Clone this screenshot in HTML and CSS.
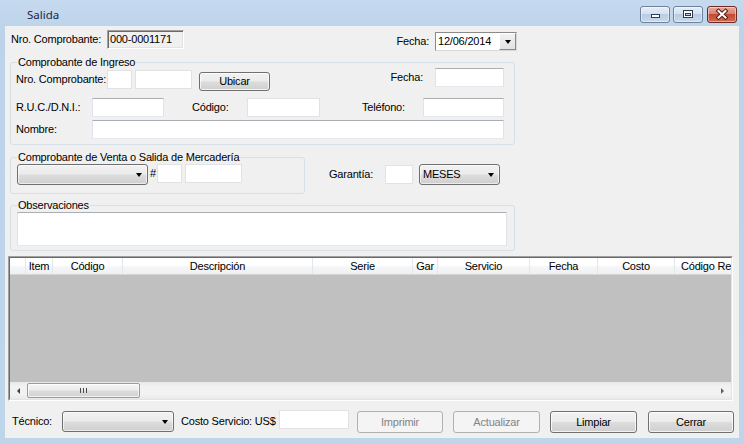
FILE: index.html
```html
<!DOCTYPE html>
<html lang="es">
<head>
<meta charset="utf-8">
<title>Salida</title>
<link rel="stylesheet" href="styles.css">
</head>
<body>
<div class="window">
  <header class="titlebar">
    <span class="title">Salida</span>
    <div class="caption-buttons">
      <span class="capbtn"><svg width="28" height="15" viewBox="0 0 28 15"><rect x="10.5" y="7.5" width="8" height="3" fill="#fff" stroke="#2c3b52"/></svg></span>
      <span class="capbtn"><svg width="28" height="15" viewBox="0 0 28 15"><rect x="9.5" y="3.5" width="9" height="7" fill="#fff" stroke="#2c3b52"/><rect x="11.5" y="6.5" width="5" height="2" fill="#c9d8ea" stroke="#2c3b52"/></svg></span>
      <span class="capbtn close"><svg width="28" height="15" viewBox="0 0 28 15"><path d="M10.5 4 L17.5 10.5 M17.5 4 L10.5 10.5" stroke="#4a1a12" stroke-width="4" stroke-linecap="square" fill="none"/><path d="M10.5 4 L17.5 10.5 M17.5 4 L10.5 10.5" stroke="#fff" stroke-width="2" stroke-linecap="square" fill="none"/></svg></span>
    </div>
  </header>

  <main class="client">
    <div class="row top-row">
      <span class="lbl w96">Nro. Comprobante:</span>
      <span class="ro">000-0001171</span>
      <span class="lbl fecha-top">Fecha:</span>
      <div class="datepick"><span class="dp-text">12/06/2014</span><span class="dp-btn"></span></div>
    </div>

    <section class="group g-ingreso">
      <div class="legend">Comprobante de Ingreso</div>
      <div class="row gi-row gi-a">
        <span class="lbl w91">Nro. Comprobante:</span>
        <span class="tb w25"></span>
        <span class="tb w57 ml3"></span>
        <span class="btn ubicar">Ubicar</span>
        <span class="lbl fecha-in">Fecha:</span>
        <span class="tb dark w69 up2"></span>
      </div>
      <div class="row gi-row gi-b">
        <span class="lbl w76">R.U.C./D.N.I.:</span>
        <span class="tb dark w72"></span>
        <span class="lbl lbl-cod">Código:</span>
        <span class="tb w73"></span>
        <span class="lbl lbl-tel">Teléfono:</span>
        <span class="tb dark w81"></span>
      </div>
      <div class="row gi-row gi-c">
        <span class="lbl w76">Nombre:</span>
        <span class="tb dark w412"></span>
      </div>
    </section>

    <div class="row band">
      <section class="group g-venta">
        <div class="legend">Comprobante de Venta o Salida de Mercadería</div>
        <div class="row gv-row">
          <span class="combo w131"></span>
          <span class="lbl hash">#</span>
          <span class="tb w25"></span>
          <span class="tb w57 ml3"></span>
        </div>
      </section>
      <span class="lbl lbl-gar">Garantía:</span>
      <span class="tb gar"></span>
      <span class="combo meses">MESES</span>
    </div>

    <section class="group g-obs">
      <div class="legend">Observaciones</div>
      <div class="tb dark obs"></div>
    </section>

    <div class="grid">
      <div class="grid-inner">
        <div class="grid-head">
          <span class="hc c-rh"></span>
          <span class="hc c-item">Item</span>
          <span class="hc c-cod">Código</span>
          <span class="hc c-desc">Descripción</span>
          <span class="hc c-serie">Serie</span>
          <span class="hc c-gar">Gar</span>
          <span class="hc c-serv">Servicio</span>
          <span class="hc c-fecha">Fecha</span>
          <span class="hc c-costo">Costo</span>
          <span class="hc c-last">Código Re</span>
        </div>
        <div class="grid-body"></div>
        <div class="hscroll">
          <span class="sb-arrow left"></span>
          <span class="sb-thumb"><span class="grip"></span></span>
          <span class="sb-track"></span>
          <span class="sb-arrow right"></span>
        </div>
      </div>
    </div>

    <div class="row bottom">
      <span class="lbl lbl-tec">Técnico:</span>
      <span class="combo tec"></span>
      <span class="lbl lbl-costo">Costo Servicio: US$</span>
      <span class="tb costo"></span>
      <span class="btn disabled b-imp">Imprimir</span>
      <span class="btn disabled b-act">Actualizar</span>
      <span class="btn b-lim">Limpiar</span>
      <span class="btn b-cer">Cerrar</span>
    </div>
  </main>
</div>
</body>
</html>
```

FILE: styles.css
```css
* { box-sizing: border-box; margin: 0; padding: 0; }
html, body { width: 744px; height: 444px; overflow: hidden; }
body {
  background: #bfd4ea;
  font-family: "Liberation Sans", Arial, sans-serif;
  font-size: 11px;
  line-height: 13px;
  letter-spacing: -0.2px;
  color: #000;
}

.window {
  width: 744px;
  height: 444px;
  display: flex;
  flex-direction: column;
  background: linear-gradient(180deg, #c6daef 0, #bcd3ea 30px, #bfd5eb 100%);
}

/* Title bar */
.titlebar { flex: none; height: 26px; display: flex; align-items: flex-start; }
.title {
  margin: 7px 0 0 27px;
  font-family: "Noto Sans", "Liberation Sans", sans-serif;
  font-size: 11.5px;
  line-height: 15px;
  letter-spacing: 0;
  color: #1c2739;
}
.caption-buttons { margin: 6px 7px 0 auto; display: flex; }
.capbtn {
  width: 30px;
  height: 17px;
  border: 1px solid #6e819b;
  border-radius: 3px;
  background: linear-gradient(180deg, #e6eef8 0, #d4e1f0 45%, #b9cce3 50%, #c9d9ec 100%);
  box-shadow: inset 0 0 0 1px rgba(255,255,255,.45);
}
.capbtn + .capbtn { margin-left: 3px; }
.capbtn.close {
  margin-left: 4px;
  border-color: #6c2a20;
  background: linear-gradient(180deg, #eaa99a 0, #d98270 45%, #c54a33 50%, #d06a50 100%);
}
.capbtn svg { display: block; }

/* Client area */
.client {
  flex: none;
  margin: 0 5px;
  height: 412px;
  background: #f0f0f0;
  padding-top: 4px;
}
.row { display: flex; align-items: flex-start; }
.lbl { flex: none; line-height: 19px; white-space: nowrap; }

.w96 { width: 96px; }
.w91 { width: 91px; }
.w76 { width: 76px; }
.w25 { width: 25px; }
.w57 { width: 57px; }
.w69 { width: 69px; }
.w72 { width: 72px; }
.w73 { width: 73px; }
.w81 { width: 81px; }
.w131 { width: 131px; }
.w412 { width: 412px; }
.ml3 { margin-left: 3px; }
.up2 { margin-top: -2px; }

/* first row */
.top-row { width: 512px; height: 21px; padding-left: 6px; }
.ro {
  flex: none;
  width: 77px;
  height: 19px;
  background: #f0f0f0;
  border: 1px solid;
  border-color: #a0a0a0 #ffffff #ffffff #a0a0a0;
  box-shadow: inset 1px 1px 0 #696969, inset -1px -1px 0 #e3e3e3;
  padding-left: 2px;
  line-height: 17px;
}
.fecha-top { margin: 2px 6px 0 auto; }
.datepick {
  flex: none;
  margin-top: 2px;
  width: 82px;
  height: 19px;
  background: #fff;
  border: 1px solid;
  border-color: #8a8a8a #d8d8d8 #d8d8d8 #8a8a8a;
  display: flex;
}
.dp-text { padding-left: 2px; line-height: 17px; }
.dp-btn {
  margin-left: auto;
  width: 17px;
  height: 17px;
  background: linear-gradient(180deg, #f2f2f2, #e2e2e2);
  border: 1px solid;
  border-color: #ffffff #8a8a8a #8a8a8a #ffffff;
  display: flex;
  align-items: center;
  justify-content: center;
}
.dp-btn::after {
  content: "";
  border-left: 3.5px solid transparent;
  border-right: 3.5px solid transparent;
  border-top: 4px solid #000;
}

/* group boxes */
.group {
  flex: none;
  border: 1px solid #d5dfe5;
  border-radius: 3px;
}
.legend {
  width: max-content;
  margin: -7px 0 0 6px;
  padding: 0 1px;
  background: #f0f0f0;
  line-height: 13px;
}
.g-ingreso { margin: 11px 0 0 5px; width: 505px; height: 83px; }
.gi-row { height: 19px; padding: 0 10px 0 5px; }
.gi-a { margin-top: 1px; }
.gi-b { margin-top: 9px; }
.gi-c { margin-top: 3px; }
.fecha-in { margin: -2px 12px 0 auto; }
.lbl-cod { margin-left: 28px; width: 55px; }
.lbl-tel { margin-left: 42px; width: 61px; }

/* controls */
.tb {
  flex: none;
  display: block;
  height: 19px;
  background: #fff;
  border: 1px solid #e0e2e6;
}
.tb.dark { border-color: #abadb3 #e2e3ea #e3e9ef #e2e3ea; }

.btn {
  flex: none;
  display: flex;
  align-items: center;
  justify-content: center;
  height: 22px;
  border: 1px solid #707070;
  border-radius: 3px;
  background: linear-gradient(180deg, #f2f2f2 0, #ebebeb 49%, #dddddd 51%, #cfcfcf 100%);
  box-shadow: inset 0 0 0 1px rgba(255,255,255,.75);
}
.btn.disabled {
  border-color: #adb2b5;
  background: #f4f4f4;
  color: #838383;
  box-shadow: none;
}
.ubicar { width: 71px; height: 19px; margin: 2px 0 0 7px; }

.combo {
  flex: none;
  display: flex;
  align-items: center;
  height: 21px;
  padding-left: 3px;
  border: 1px solid #707070;
  border-radius: 3px;
  background: linear-gradient(180deg, #f2f2f2 0, #ebebeb 49%, #dddddd 51%, #cfcfcf 100%);
  box-shadow: inset 0 0 0 1px rgba(255,255,255,.6);
}
.combo::after {
  content: "";
  margin-left: auto;
  margin-right: 5px;
  border-left: 3.5px solid transparent;
  border-right: 3.5px solid transparent;
  border-top: 4px solid #000;
}

/* second band */
.band { margin-top: 12px; padding-left: 5px; height: 37px; }
.g-venta { width: 295px; height: 37px; }
.gv-row { padding-left: 6px; }
.hash { margin-left: 2px; width: 7px; }
.lbl-gar { margin: 8px 0 0 24px; width: 56px; }
.tb.gar { width: 28px; margin-top: 8px; }
.combo.meses { width: 81px; margin: 7px 0 0 6px; }

/* observaciones */
.g-obs { margin: 11px 0 0 5px; width: 505px; height: 46px; }
.obs { width: 490px; height: 34px; margin-left: 6px; }

/* grid */
.grid {
  margin: 5px 0 0 3px;
  width: 725px;
  height: 145px;
  border: 1px solid;
  border-color: #a0a0a0 #ffffff #ffffff #a0a0a0;
}
.grid-inner {
  height: 100%;
  border: 1px solid;
  border-color: #696969 #e3e3e3 #e3e3e3 #696969;
  display: flex;
  flex-direction: column;
  overflow: hidden;
}
.grid-head {
  flex: none;
  height: 17px;
  display: flex;
  background: linear-gradient(180deg, #ffffff 0, #ffffff 45%, #f5f6f8 55%, #eef0f2 100%);
  border-bottom: 1px solid #d5d5d5;
}
.hc {
  flex: none;
  text-align: center;
  line-height: 16px;
  white-space: nowrap;
  overflow: hidden;
  border-right: 1px solid #e3e6ea;
}
.c-rh { width: 16px; }
.c-item { width: 27px; }
.c-cod { width: 70px; }
.c-desc { width: 190px; }
.c-serie { width: 100px; }
.c-gar { width: 25px; }
.c-serv { width: 92px; }
.c-fecha { width: 68px; }
.c-costo { width: 77px; }
.c-last { flex: 1; text-align: left; padding-left: 6px; border-right: none; }
.grid-body { flex: 1; background: #c0c0c0; }

.hscroll {
  flex: none;
  height: 17px;
  display: flex;
  background: linear-gradient(180deg, #e8e8e8 0, #f2f2f2 25%, #f2f2f2 75%, #e8e8e8 100%);
}
.sb-arrow { flex: none; width: 17px; display: flex; align-items: center; justify-content: center; }
.sb-arrow.left::after {
  content: "";
  border-top: 3px solid transparent;
  border-bottom: 3px solid transparent;
  border-right: 3px solid #404040;
}
.sb-arrow.right::after {
  content: "";
  border-top: 3px solid transparent;
  border-bottom: 3px solid transparent;
  border-left: 3px solid #606060;
}
.sb-thumb {
  flex: none;
  width: 113px;
  margin: 1px 0;
  border: 1px solid #9b9b9b;
  border-radius: 2px;
  background: linear-gradient(180deg, #f5f5f5 0, #ececec 49%, #dcdcdc 51%, #d2d2d2 100%);
  box-shadow: inset 0 0 0 1px rgba(255,255,255,.7);
  display: flex;
  align-items: center;
  justify-content: center;
}
.grip {
  width: 7px;
  height: 5px;
  background: repeating-linear-gradient(90deg, #4a4a4a 0 1px, transparent 1px 3px);
}
.sb-track { flex: 1; }

/* bottom row */
.bottom { margin-top: 10px; padding-left: 7px; height: 22px; }
.lbl-tec { width: 50px; line-height: 21px; }
.combo.tec { width: 112px; }
.lbl-costo { margin-left: 7px; width: 98px; line-height: 21px; }
.tb.costo { width: 70px; margin-top: -1px; }
.b-imp { width: 86px; margin-left: 8px; }
.b-act { width: 87px; margin-left: 10px; }
.b-lim { width: 87px; margin-left: 10px; }
.b-cer { width: 86px; margin-left: 11px; }
```
